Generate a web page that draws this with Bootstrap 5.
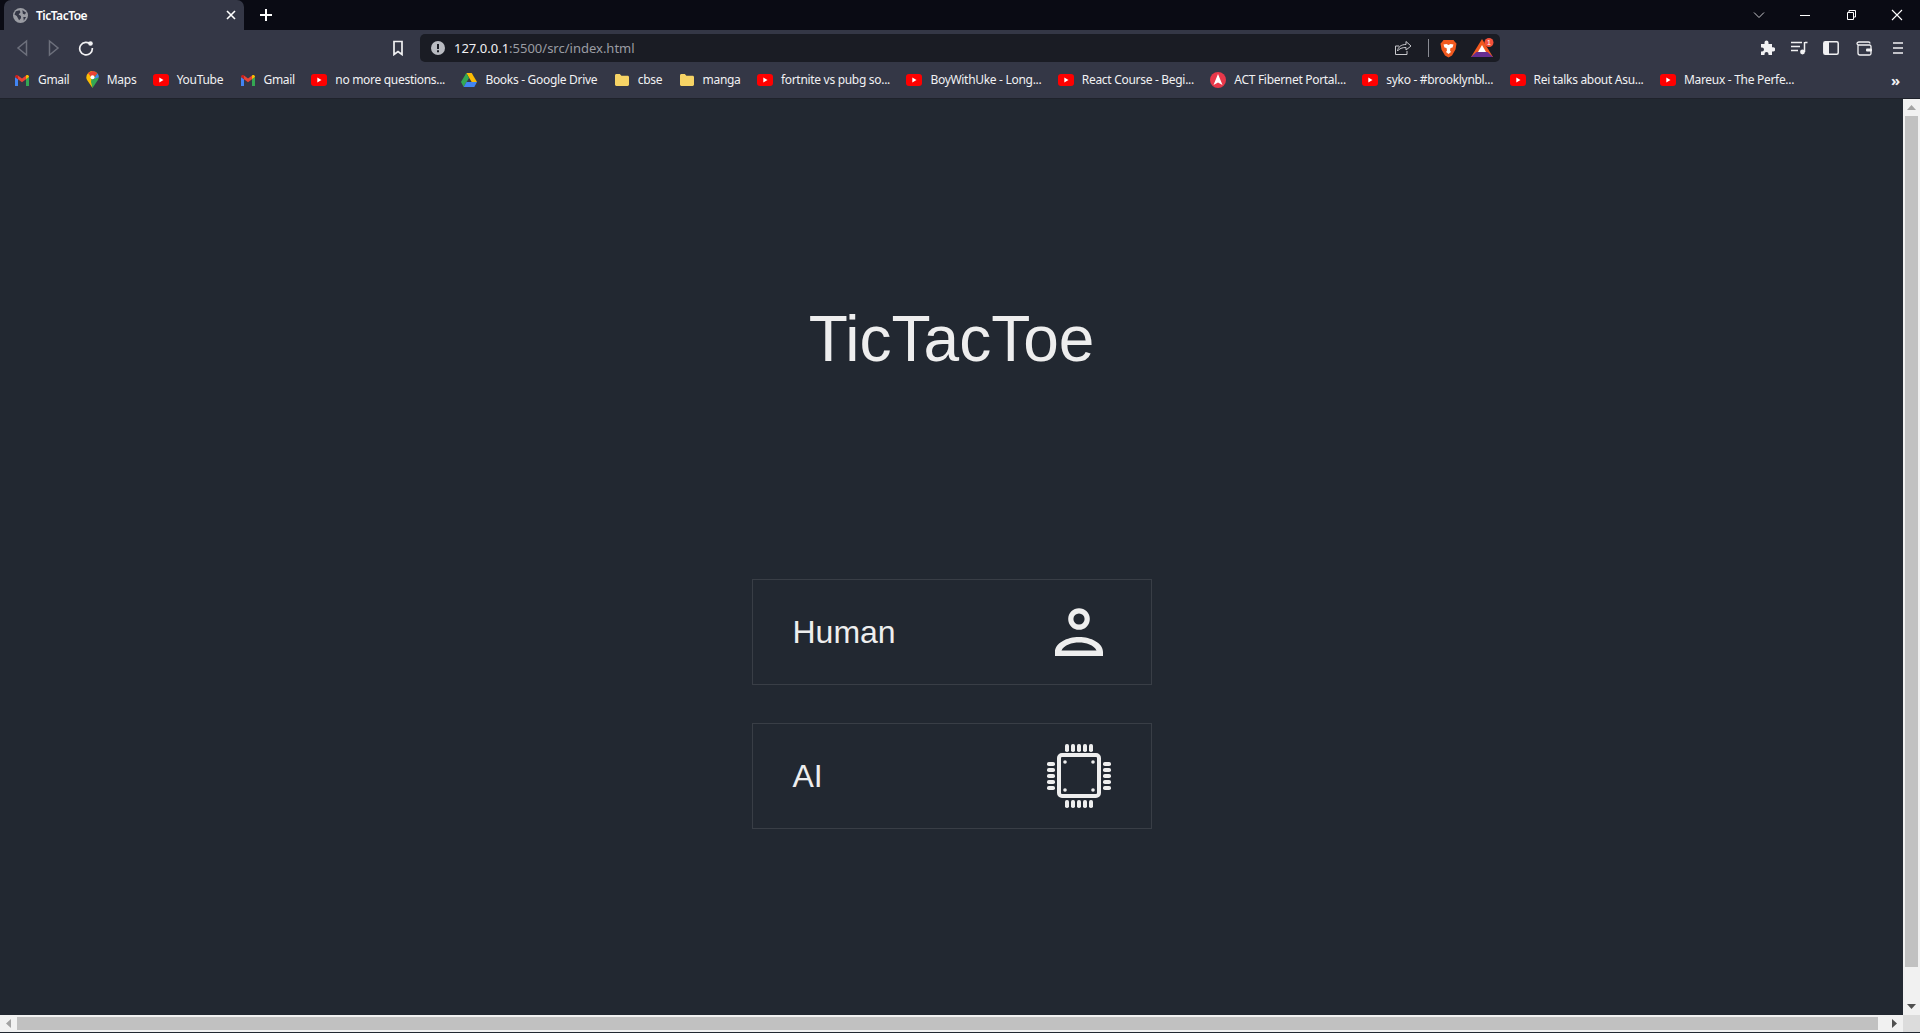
<!DOCTYPE html>
<html lang="en">
<head>
    <meta charset="UTF-8">
    <meta name="viewport" content="width=device-width, initial-scale=1.0">
    <title>TicTacToe</title>
    <link href="https://cdn.jsdelivr.net/npm/bootstrap@5.3.0/dist/css/bootstrap.min.css" rel="stylesheet">
    <style>
        html, body { height: 100%; overflow: hidden; }
        body { background-color: #222831; font-family: "Liberation Sans", Arial, sans-serif; }

        .browser-shell { height: 1033px; }

        /* browser chrome */
        .tab-strip { height: 30px; background-color: #0a0b14; padding-left: 4px; flex: none; }
        .tab-active { width: 240px; background-color: #343746; border-radius: 7px 7px 0 0; padding: 0 5px 0 9px; color: #fff; font: 600 12px "Noto Sans", sans-serif; letter-spacing: -.5px; }
        .tab-plus { width: 44px; }
        .win-btn { width: 46px; }
        .tool-bar { height: 36px; background-color: #343746; padding: 0 6px 0 6px; flex: none; }
        .tool-btn { width: 32px; height: 32px; flex: none; }
        .bookmark-toggle { margin-left: 280px; }
        .gap-after-1 { margin-right: 1px; }
        .gap-after-2 { margin-right: 2px; }
        .address-box { width: 1080px; height: 28px; margin-left: 6px; background-color: #1a1c24; border-radius: 5px; padding: 0 2px 0 11px; font: 13px "Noto Sans", sans-serif; color: #9a9ca3; }
        .address-host { color: #f1f1f3; }
        .address-icon { margin-right: 9px; }
        .address-box .sep-line { width: 1px; height: 18px; background-color: #8a8c94; margin: 0 3px 0 9px; }
        .bookmark-bar { height: 33px; background-color: #343746; border-bottom: 1px solid #1f222b; padding: 0 0 5px 14px; flex: none; color: #f1f1f3; font: 12px "Noto Sans", sans-serif; letter-spacing: -.3px; gap: 16.4px; }
        .bookmark-item { gap: 8px; white-space: nowrap; }
        .bookmark-more { margin-right: 20px; font-size: 15px; font-weight: 700; }

        /* page */
        .page-row { min-height: 0; }
        .page-main { background-color: #222831; color: #eee; padding-top: 202px; }
        .game-title { font-family: "Liberation Sans", Arial, sans-serif; font-size: 64px; font-weight: 400; line-height: 77px; margin: 0 0 201px; }
        .mode-list { gap: 38px; }
        .mode-choice { width: 400px; height: 106px; background: transparent; border: 1px solid #393e46; color: #eee; font-size: 32px; padding: 0 36px 0 40px; }
        .mode-choice:hover { background-color: #393e46; }

        /* classic scrollbars */
        .scroll-v { width: 17px; background-color: #f1f1f1; flex: none; padding: 0 2px; }
        .scroll-h { height: 17px; background-color: #f1f1f1; flex: none; margin-bottom: 1px; }
        .scroll-end { width: 17px; flex: none; }
        .scroll-end-v { height: 17px; flex: none; }
        .scroll-thumb { background-color: #c1c1c1; }
        .thumb-v { margin-bottom: 31px; }
        .thumb-h { height: 13px; }
        .scroll-corner { width: 17px; flex: none; background-color: #dcdcdc; }
    </style>
</head>
<body>
<svg width="0" height="0" class="position-absolute">
    <defs>
        <symbol id="yt" viewBox="0 0 16 12">
            <rect width="16" height="12" rx="3" fill="#f00"/>
            <path d="M6.3 3.6 10.5 6l-4.2 2.4z" fill="#fff"/>
        </symbol>
        <symbol id="gm" viewBox="0 0 16 12">
            <path d="M1 12V3l3 2.2V12z" fill="#4285f4"/>
            <path d="M12 12V5.2L15 3v9z" fill="#34a853"/>
            <path d="M4 5.2 8 8.2l4-3V1.6L8 4.6 4 1.6z" fill="#ea4335"/>
            <path d="M1 3c0-1.8 2-2.4 3-1.4v3.6z" fill="#c5221f"/>
            <path d="M15 3c0-1.8-2-2.4-3-1.4v3.6z" fill="#fbbc04"/>
        </symbol>
        <symbol id="folder" viewBox="0 0 16 14">
            <path d="M1 2.5C1 1.7 1.6 1 2.4 1h3.4l1.6 1.7h6.2c.8 0 1.4.6 1.4 1.4v7.5c0 .8-.6 1.4-1.4 1.4H2.400C1.600 13 1 12.400 1 11.600z" fill="#f6d365"/>
        </symbol>
    </defs>
</svg>

<div class="browser-shell d-flex flex-column">
    <div class="tab-strip d-flex align-items-end">
        <div class="tab-active d-flex align-items-center h-100">
            <svg width="15" height="15" viewBox="0 0 16 16" class="me-2 flex-shrink-0"><circle cx="8" cy="8" r="8" fill="#9a9ca3"/><path d="M3 3.500 7 2.500l1 2-2 2.500 2.500 1.500v2.500L6.500 13 4 8.500 1.500 7zM10 2l4 3-1.500 2-2-1zM11 9.500h3l-2.500 4z" fill="#343746"/></svg>
            <span class="flex-grow-1">TicTacToe</span>
            <svg width="16" height="16" viewBox="0 0 16 16"><path d="M4 4l8 8M12 4l-8 8" stroke="#fff" stroke-width="1.600"/></svg>
        </div>
        <div class="tab-plus d-flex align-items-center justify-content-center h-100">
            <svg width="14" height="14" viewBox="0 0 14 14"><path d="M7 1v12M1 7h12" stroke="#fff" stroke-width="2"/></svg>
        </div>
        <div class="ms-auto d-flex h-100">
            <div class="win-btn d-flex align-items-center justify-content-center">
                <svg width="12" height="8" viewBox="0 0 12 8"><path d="M1 1.500l5 5 5-5" stroke="#c8c8cc" fill="none"/></svg>
            </div>
            <div class="win-btn d-flex align-items-center justify-content-center">
                <svg width="12" height="12" viewBox="0 0 12 12"><path d="M1 6.500h10" stroke="#fff"/></svg>
            </div>
            <div class="win-btn d-flex align-items-center justify-content-center">
                <svg width="12" height="12" viewBox="0 0 12 12"><path d="M2.500 3.500h6v7h-6zM4 3.500V1.500h6.500v6.500H8.500" stroke="#fff" fill="none"/></svg>
            </div>
            <div class="win-btn d-flex align-items-center justify-content-center">
                <svg width="12" height="12" viewBox="0 0 12 12"><path d="M1 1l10 10M11 1 1 11" stroke="#fff" stroke-width="1.100"/></svg>
            </div>
        </div>
    </div>

    <div class="tool-bar d-flex align-items-center">
        <div class="tool-btn d-flex align-items-center justify-content-center">
            <svg width="14" height="18" viewBox="0 0 14 18"><path d="M11.500 2 3 9l8.500 7z" stroke="#6d707c" stroke-width="1.500" fill="none"/></svg>
        </div>
        <div class="tool-btn d-flex align-items-center justify-content-center">
            <svg width="14" height="18" viewBox="0 0 14 18"><path d="M2.500 2 11 9l-8.500 7z" stroke="#6d707c" stroke-width="1.500" fill="none"/></svg>
        </div>
        <div class="tool-btn d-flex align-items-center justify-content-center">
            <svg width="16" height="16" viewBox="0 0 16 16"><path d="M12.800 4.500A6.300 6.300 0 1 0 14.300 8" stroke="#f1f1f3" stroke-width="1.700" fill="none"/><circle cx="12.500" cy="3.500" r="2.300" fill="#f1f1f3"/></svg>
        </div>
        <div class="tool-btn bookmark-toggle d-flex align-items-center justify-content-center">
            <svg width="12" height="16" viewBox="0 0 12 16"><path d="M2 1.500h8v13L6 11.500l-4 3z" stroke="#f1f1f3" stroke-width="1.700" fill="none"/></svg>
        </div>
        <div class="address-box d-flex align-items-center">
            <svg width="14" height="14" viewBox="0 0 14 14" class="address-icon flex-shrink-0"><circle cx="7" cy="7" r="7" fill="#b9bbc1"/><path d="M6 3h2v5H6zM6 9.200h2v2H6z" fill="#1a1c24"/></svg>
            <span><span class="address-host">127.0.0.1</span>:5500/src/index.html</span>
            <div class="ms-auto d-flex align-items-center">
                <div class="tool-btn d-flex align-items-center justify-content-center">
                    <svg width="18" height="16" viewBox="0 0 18 16"><path d="M12 1.500 17 6l-5 4V7.500c-4 0-6.500 1-8.500 3.500C4 7 7 4.500 12 4.500zM13 11v3.500H1.500V6H5" stroke="#c8c8cc" fill="none"/></svg>
                </div>
                <div class="sep-line"></div>
                <div class="tool-btn gap-after-2 d-flex align-items-center justify-content-center">
                    <svg width="17" height="19" viewBox="0 0 17 19"><path d="M3.500 1h10L15 3l1.500 1.500-1 6-3.500 6-3.500 2-3.500-2-3.500-6-1-6L2 3z" fill="#f1591f"/><path d="M3.500 5.500 6.500 5l2 1 2-1 3 .5-1 3-2 .5-.5 2.500 1 1.500-2.500 2-2.500-2 1-1.500L6.500 9l-2-.5z" fill="#fff"/></svg>
                </div>
                <div class="tool-btn d-flex align-items-center justify-content-center">
                    <svg width="24" height="20" viewBox="0 0 24 20"><path d="M12 1 1 19h22z" fill="#f1591f"/><path d="M1 19l5.500-5h11l5.500 5z" fill="#662d91"/><path d="M12 7l-4 7h8z" fill="#fff"/><circle cx="19" cy="4.500" r="4.500" fill="#f4513a"/><text x="19" y="7" font-size="7" text-anchor="middle" fill="#fff" font-family="Liberation Sans">1</text></svg>
                </div>
            </div>
        </div>
        <div class="ms-auto d-flex align-items-center">
            <div class="tool-btn d-flex align-items-center justify-content-center">
                <svg width="16" height="16" viewBox="0 0 16 16"><path d="M5.500 2.500a2 2 0 0 1 4 0V4h3.500v3.200h1a2.200 2.200 0 0 1 0 4.400h-1V15H9.500v-1a2 2 0 0 0-4 0v1H2v-3.500h1a2 2 0 0 0 0-4H2V4h3.500z" fill="#f1f1f3"/></svg>
            </div>
            <div class="tool-btn d-flex align-items-center justify-content-center">
                <svg width="18" height="14" viewBox="0 0 18 14"><path d="M1 1.500h11M1 5.500h9M1 9.500h7M15 1.500h2.500M14.500 1v10" stroke="#f1f1f3" stroke-width="1.500" fill="none"/><circle cx="12.500" cy="11" r="2.400" fill="#f1f1f3"/></svg>
            </div>
            <div class="tool-btn gap-after-1 d-flex align-items-center justify-content-center">
                <svg width="16" height="14" viewBox="0 0 16 14"><rect x=".8" y=".8" width="14.400" height="12.400" rx="1.500" stroke="#f1f1f3" stroke-width="1.500" fill="none"/><rect x="1" y="1" width="5" height="12" fill="#f1f1f3"/></svg>
            </div>
            <div class="tool-btn gap-after-2 d-flex align-items-center justify-content-center">
                <svg width="17" height="15" viewBox="0 0 17 15"><path d="M2 3.500V12c0 1 .7 2 2 2h9.500c1 0 1.500-.8 1.500-1.500V5.500c0-1-.7-1.500-1.500-1.500H3C1.800 4 1 3.200 1 2.500S1.800 1 3 1h9.500c1 0 1.500.7 1.500 1.500" stroke="#f1f1f3" stroke-width="1.300" fill="none"/><rect x="10" y="7.500" width="6" height="3" rx="1" fill="#f1f1f3"/></svg>
            </div>
            <div class="tool-btn d-flex align-items-center justify-content-center">
                <svg width="12" height="14" viewBox="0 0 12 14"><path d="M1 2h10M1 7h10M1 12h10" stroke="#f1f1f3" stroke-width="1.600"/></svg>
            </div>
        </div>
    </div>

    <div class="bookmark-bar d-flex align-items-center">
        <div class="bookmark-item d-flex align-items-center"><svg width="16" height="12"><use href="#gm"/></svg>Gmail</div>
        <div class="bookmark-item d-flex align-items-center"><svg width="13" height="17" viewBox="0 0 13 17"><path d="M6.500 0A6.300 6.300 0 0 0 .3 6.300c0 1.300.5 2.300 1.100 3.200L6.500 17z" fill="#fbbc04"/><path d="M6.500 0c3.500 0 6.200 2.800 6.200 6.300 0 1.300-.5 2.300-1.100 3.200L6.500 17l-1.500-6z" fill="#34a853"/><path d="M2 2 6.500 0c2 0 3.800 1 5 2.500L8 6H5z" fill="#ea4335"/><path d="M11.500 2.500c.8 1 1.200 2.400 1.200 3.800L8 8z" fill="#4285f4"/><circle cx="6.500" cy="6.300" r="2" fill="#fff"/></svg>Maps</div>
        <div class="bookmark-item d-flex align-items-center"><svg width="16" height="12"><use href="#yt"/></svg>YouTube</div>
        <div class="bookmark-item d-flex align-items-center"><svg width="16" height="12"><use href="#gm"/></svg>Gmail</div>
        <div class="bookmark-item d-flex align-items-center"><svg width="16" height="12"><use href="#yt"/></svg>no more questions...</div>
        <div class="bookmark-item d-flex align-items-center"><svg width="16" height="14" viewBox="0 0 16 14"><path d="M5.300 0h5.400L16 9h-5.300z" fill="#fbbc04"/><path d="M5.300 0 0 9l2.700 5 5.300-9z" fill="#34a853"/><path d="M5.500 9H16l-2.700 5H2.700z" fill="#4285f4"/></svg>Books - Google Drive</div>
        <div class="bookmark-item d-flex align-items-center"><svg width="16" height="14"><use href="#folder"/></svg>cbse</div>
        <div class="bookmark-item d-flex align-items-center"><svg width="16" height="14"><use href="#folder"/></svg>manga</div>
        <div class="bookmark-item d-flex align-items-center"><svg width="16" height="12"><use href="#yt"/></svg>fortnite vs pubg so...</div>
        <div class="bookmark-item d-flex align-items-center"><svg width="16" height="12"><use href="#yt"/></svg>BoyWithUke - Long...</div>
        <div class="bookmark-item d-flex align-items-center"><svg width="16" height="12"><use href="#yt"/></svg>React Course - Begi...</div>
        <div class="bookmark-item d-flex align-items-center"><svg width="16" height="16" viewBox="0 0 16 16"><circle cx="8" cy="8" r="8" fill="#e8384a"/><path d="M8 2 12.500 13 8 10.500 3.500 13z" fill="#fff"/></svg>ACT Fibernet Portal...</div>
        <div class="bookmark-item d-flex align-items-center"><svg width="16" height="12"><use href="#yt"/></svg>syko - #brooklynbl...</div>
        <div class="bookmark-item d-flex align-items-center"><svg width="16" height="12"><use href="#yt"/></svg>Rei talks about Asu...</div>
        <div class="bookmark-item d-flex align-items-center"><svg width="16" height="12"><use href="#yt"/></svg>Mareux - The Perfe...</div>
        <div class="ms-auto bookmark-more">»</div>
    </div>

    <div class="page-row d-flex flex-grow-1">
        <main class="page-main flex-grow-1 d-flex flex-column align-items-center">
            <h1 class="game-title">TicTacToe</h1>
            <div class="mode-list d-flex flex-column">
                <div class="mode-choice d-flex align-items-center justify-content-between">
                    <span>Human</span>
                    <svg width="72" height="72" viewBox="0 0 72 72">
                        <circle cx="36" cy="23" r="8.200" stroke="#eee" stroke-width="5.200" fill="none"/>
                        <path fill-rule="evenodd" fill="#eee" d="M12 60v-4C12 47 24 41 36 41s24 6 24 15v4zM18.500 54.500h35C51 49 43 46.500 36 46.500S21 49 18.500 54.500z"/>
                    </svg>
                </div>
                <div class="mode-choice d-flex align-items-center justify-content-between">
                    <span>AI</span>
                    <svg width="72" height="72" viewBox="0 0 72 72">
                        <rect x="16" y="15" width="40" height="41" rx="3" stroke="#eee" stroke-width="4" fill="none"/>
                        <g fill="#eee">
                            <circle cx="22" cy="22" r="1.800"/><circle cx="50" cy="22" r="1.800"/><circle cx="22" cy="50" r="1.800"/><circle cx="50" cy="50" r="1.800"/>
                            <rect x="22" y="4" width="4" height="8" rx="1.800"/><rect x="28" y="4" width="4" height="8" rx="1.800"/><rect x="34" y="4" width="4" height="8" rx="1.800"/><rect x="40" y="4" width="4" height="8" rx="1.800"/><rect x="46" y="4" width="4" height="8" rx="1.800"/>
                            <rect x="22" y="60" width="4" height="8" rx="1.800"/><rect x="28" y="60" width="4" height="8" rx="1.800"/><rect x="34" y="60" width="4" height="8" rx="1.800"/><rect x="40" y="60" width="4" height="8" rx="1.800"/><rect x="46" y="60" width="4" height="8" rx="1.800"/>
                            <rect x="4" y="22" width="8" height="4" rx="1.800"/><rect x="4" y="28" width="8" height="4" rx="1.800"/><rect x="4" y="34" width="8" height="4" rx="1.800"/><rect x="4" y="40" width="8" height="4" rx="1.800"/><rect x="4" y="46" width="8" height="4" rx="1.800"/>
                            <rect x="60" y="22" width="8" height="4" rx="1.800"/><rect x="60" y="28" width="8" height="4" rx="1.800"/><rect x="60" y="34" width="8" height="4" rx="1.800"/><rect x="60" y="40" width="8" height="4" rx="1.800"/><rect x="60" y="46" width="8" height="4" rx="1.800"/>
                        </g>
                    </svg>
                </div>
            </div>
        </main>
        <div class="scroll-v d-flex flex-column">
            <div class="scroll-end-v d-flex align-items-center justify-content-center">
                <svg width="9" height="5" viewBox="0 0 9 5"><path d="M4.500 0 9 5H0z" fill="#a3a3a3"/></svg>
            </div>
            <div class="scroll-thumb thumb-v flex-grow-1"></div>
            <div class="scroll-end-v d-flex align-items-center justify-content-center">
                <svg width="9" height="5" viewBox="0 0 9 5"><path d="M0 0h9L4.500 5z" fill="#505050"/></svg>
            </div>
        </div>
    </div>

    <div class="scroll-h d-flex">
        <div class="scroll-end d-flex align-items-center justify-content-center">
            <svg width="5" height="9" viewBox="0 0 5 9"><path d="M5 0v9L0 4.500z" fill="#a3a3a3"/></svg>
        </div>
        <div class="flex-grow-1 d-flex"><div class="scroll-thumb thumb-h w-100 my-auto"></div></div>
        <div class="scroll-end ms-2 d-flex align-items-center justify-content-center">
            <svg width="5" height="9" viewBox="0 0 5 9"><path d="M0 0v9l5-4.500z" fill="#505050"/></svg>
        </div>
        <div class="scroll-corner"></div>
    </div>
</div>
<script src="https://cdn.jsdelivr.net/npm/bootstrap@5.3.0/dist/js/bootstrap.bundle.min.js"></script>
</body>
</html>
